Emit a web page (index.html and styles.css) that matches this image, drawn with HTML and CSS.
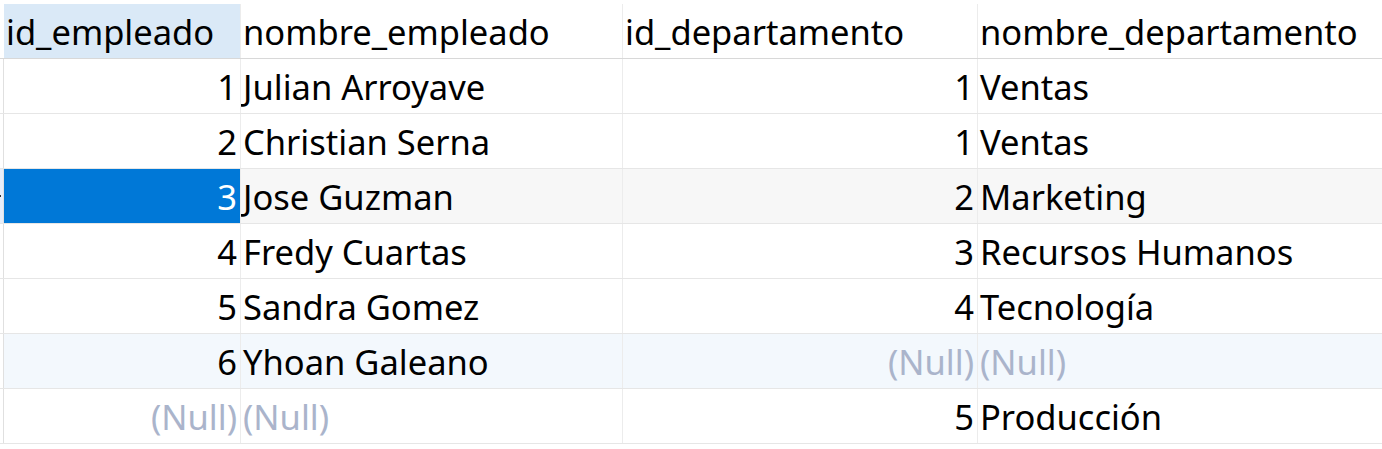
FILE: index.html
```html
<!DOCTYPE html>
<html lang="es">
<head>
<meta charset="utf-8">
<title>Empleados</title>
<link rel="stylesheet" href="styles.css">
</head>
<body>
<div class="grid">
  <div class="row head">
    <div class="ind"></div>
    <div class="cell hl">id_empleado</div>
    <div class="cell">nombre_empleado</div>
    <div class="cell">id_departamento</div>
    <div class="cell last">nombre_departamento</div>
  </div>
  <div class="row">
    <div class="ind"></div>
    <div class="cell num">1</div>
    <div class="cell">Julian Arroyave</div>
    <div class="cell num">1</div>
    <div class="cell last">Ventas</div>
  </div>
  <div class="row">
    <div class="ind"></div>
    <div class="cell num">2</div>
    <div class="cell">Christian Serna</div>
    <div class="cell num">1</div>
    <div class="cell last">Ventas</div>
  </div>
  <div class="row current">
    <div class="ind"><span class="mark"></span></div>
    <div class="cell num sel">3</div>
    <div class="cell">Jose Guzman</div>
    <div class="cell num">2</div>
    <div class="cell last">Marketing</div>
  </div>
  <div class="row">
    <div class="ind"></div>
    <div class="cell num">4</div>
    <div class="cell">Fredy Cuartas</div>
    <div class="cell num">3</div>
    <div class="cell last">Recursos Humanos</div>
  </div>
  <div class="row">
    <div class="ind"></div>
    <div class="cell num">5</div>
    <div class="cell">Sandra Gomez</div>
    <div class="cell num">4</div>
    <div class="cell last">Tecnología</div>
  </div>
  <div class="row alt">
    <div class="ind"></div>
    <div class="cell num">6</div>
    <div class="cell">Yhoan Galeano</div>
    <div class="cell num null">(Null)</div>
    <div class="cell last null">(Null)</div>
  </div>
  <div class="row">
    <div class="ind"></div>
    <div class="cell num null">(Null)</div>
    <div class="cell null">(Null)</div>
    <div class="cell num">5</div>
    <div class="cell last">Producción</div>
  </div>
</div>
</body>
</html>
```

FILE: styles.css
```css
html, body {
  margin: 0;
  padding: 0;
  background: #ffffff;
}

body {
  font-family: "Noto Sans", "Open Sans", "Liberation Sans", sans-serif;
  font-size: 34.5px;
  color: #000000;
  overflow: hidden;
}

.grid {
  padding-top: 4px;
  width: 1382px;
}

.row {
  display: grid;
  grid-template-columns: 4px 237px 382px 355px 1fr;
  height: 55px;
  box-sizing: border-box;
  border-bottom: 1px solid #e6e6e6;
}

.row.head {
  height: 55px;
  border-bottom-color: #d8d8d8;
}

.ind {
  box-sizing: border-box;
  border-right: 1px solid #e0e0e0;
  position: relative;
}

.head .ind {
  border-right: none;
}

.current .ind {
  background: #e6eefa;
}

.mark {
  position: absolute;
  left: 0;
  top: 26px;
  width: 1px;
  height: 2px;
  background: #333;
}

.cell {
  box-sizing: border-box;
  border-right: 1px solid #ececec;
  padding: 2px 3px 0 2px;
  display: flex;
  align-items: center;
  white-space: nowrap;
  overflow: hidden;
  line-height: 1;
}

.cell.last {
  border-right: none;
}

.cell.num {
  justify-content: flex-end;
}

.hl {
  background: #dae9f7;
}

.current .cell {
  background: #f7f7f7;
}

.current .cell.sel {
  background: #0078d7;
  color: #ffffff;
}

.alt .cell {
  background: #f3f8fd;
}

.null {
  color: #aab4cb;
}
```
